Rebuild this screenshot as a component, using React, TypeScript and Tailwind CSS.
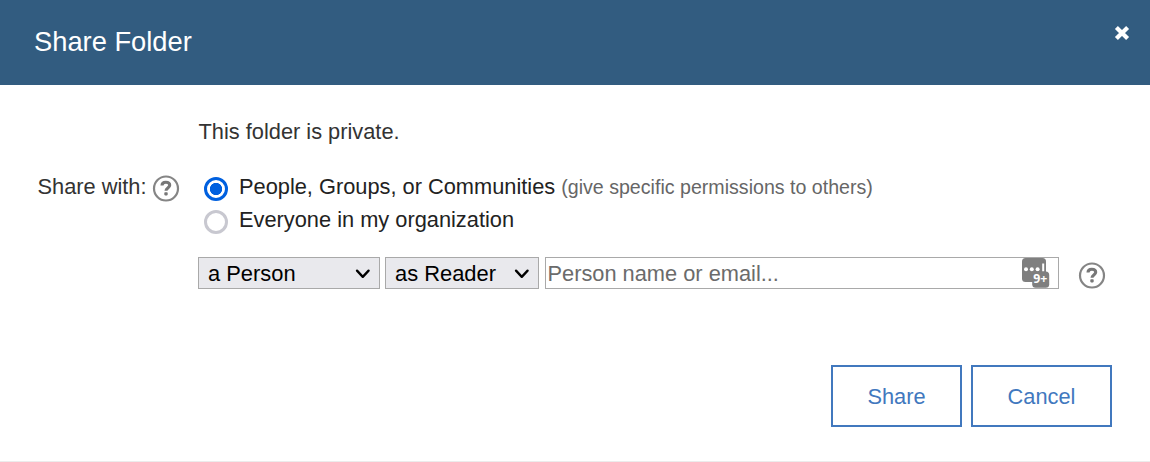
import React from "react";

function HelpIcon() {
  return (
    <svg width="28" height="28" viewBox="0 0 28 28" fill="none" className="block shrink-0" role="img" aria-label="Help">
      <circle cx="14" cy="14.5" r="12" stroke="#858585" strokeWidth="2.2" />
      <path d="M10 11.6C10 9.2 11.6 8.3 13.8 8.3c2.3 0 3.9 1 3.9 3 0 2.6-3.7 2.7-3.7 5.4" stroke="#777" strokeWidth="3.1" />
      <rect x="12.3" y="18.2" width="3.4" height="3.2" rx=".8" fill="#777" />
    </svg>
  );
}

function Select({ options, label, className }: { options: string[]; label: string; className: string }) {
  return (
    <div className={`relative h-8 ${className}`}>
      <select
        aria-label={label}
        className="block h-8 w-full appearance-none border border-[#a9a9a9] bg-[#e9e9ed] pb-0 pl-[9px] pt-px text-[21.9px] leading-[30px] text-black outline-none"
      >
        {options.map((o) => (
          <option key={o}>{o}</option>
        ))}
      </select>
      <svg className="pointer-events-none absolute right-[9px] top-[11px]" width="16" height="12" viewBox="0 0 16 12" fill="none">
        <path d="M2 2.6 7.8 8.9 13.6 2.6" stroke="#000" strokeWidth="2.3" strokeLinecap="round" strokeLinejoin="round" />
      </svg>
    </div>
  );
}

function Radio({ checked, label, children }: { checked?: boolean; label: string; children?: React.ReactNode }) {
  return (
    <label className="flex h-[33px] items-start">
      <span className="mt-[5px] flex size-6 shrink-0 items-center justify-center">
        <input
          type="radio"
          name="scope"
          defaultChecked={checked}
          className="size-6 appearance-none rounded-full border-[3px] border-[#c8c8d0] bg-white checked:border-[#0060df] checked:bg-[radial-gradient(circle,#0060df_5.8px,white_6.5px)]"
        />
      </span>
      <span className="ml-[11px] whitespace-nowrap text-[21.8px] leading-[30px] text-[#222]">{label}</span>
      {children}
    </label>
  );
}

function FieldBadge() {
  return (
    <svg className="absolute right-[9px] top-0 h-[31px] w-[28px]" viewBox="0 0 28 31">
      <rect x="0" y="1" width="24" height="24" rx="3.5" fill="#7f7f7f" />
      <circle cx="4" cy="12.2" r="2" fill="#fff" />
      <circle cx="9.8" cy="12.2" r="2" fill="#fff" />
      <circle cx="15.6" cy="12.2" r="2" fill="#fff" />
      <rect x="20.2" y="6.5" width="2" height="8" fill="#fff" />
      <rect x="10.2" y="14.5" width="17" height="16.3" rx="3.5" fill="#7f7f7f" />
      <text x="11.3" y="26.2" fontSize="12.3" fontWeight="700" fill="#fff" fontFamily="'Open Sans', sans-serif">9+</text>
    </svg>
  );
}

export default function App() {
  return (
    <div className="flex h-[462px] w-[1150px] flex-col overflow-hidden border-b border-[#ececec] bg-white font-['Liberation_Sans',Arial,sans-serif] text-[#222]">
      <header className="flex h-[85px] shrink-0 items-start justify-between bg-[#325c80] pl-[34px] pr-[19px]">
        <h1 className="mt-[26px] text-[27.3px] leading-8 text-white">Share Folder</h1>
        <button aria-label="Close" className="mt-[24px]">
          <svg width="18" height="18" viewBox="0 0 18 18" className="block">
            <path d="m3.4 3.4 11.2 11.2M14.6 3.4 3.4 14.6" stroke="#fff" strokeWidth="4.2" />
          </svg>
        </button>
      </header>
      <main className="flex flex-1 flex-col">
        <p className="ml-[198.5px] mt-8 text-[21.8px] leading-[30px] text-[#333]">This folder is private.</p>
        <div className="mt-[25px] flex items-start">
          <div className="flex w-[204px] shrink-0 items-start pl-[37.5px]">
            <span className="w-[114.5px] whitespace-nowrap text-[21.8px] leading-[30px] text-[#333]">Share with:</span>
            <div className="mt-[2px]"><HelpIcon /></div>
          </div>
          <div>
            <Radio checked label="People, Groups, or Communities">
              <span className="ml-1.5 whitespace-nowrap text-[19.63px] leading-[30px] text-[#666]">
                (give specific permissions to others)
              </span>
            </Radio>
            <Radio label="Everyone in my organization" />
          </div>
        </div>
        <div className="ml-[198px] mt-[19px] flex h-9 items-start">
          <Select label="Share recipient" options={["a Person", "a Group", "a Community"]} className="w-[182px]" />
          <Select label="Role" options={["as Reader", "as Editor"]} className="ml-[5px] w-[154px]" />
          <div className="relative ml-1.5 h-8 w-[514px]">
            <input
              aria-label="Recipient"
              placeholder="Person name or email..."
              className="block h-8 w-full border border-[#a9a9a9] bg-white pl-[1.5px] pr-10 pt-0.5 text-[21.8px] text-black outline-none placeholder:text-[#6b6b6b]"
            />
            <FieldBadge />
          </div>
          <div className="ml-[19px] mt-[4px]"><HelpIcon /></div>
        </div>
        <div className="mr-[38px] mt-[72px] flex justify-end gap-[9px]">
          <button className="h-[62px] w-[131px] border-2 border-[#4178be] bg-white pt-0.5 text-[21.8px] text-[#4178be]">Share</button>
          <button className="h-[62px] w-[141px] border-2 border-[#4178be] bg-white pt-0.5 text-[21.8px] text-[#4178be]">Cancel</button>
        </div>
      </main>
    </div>
  );
}
